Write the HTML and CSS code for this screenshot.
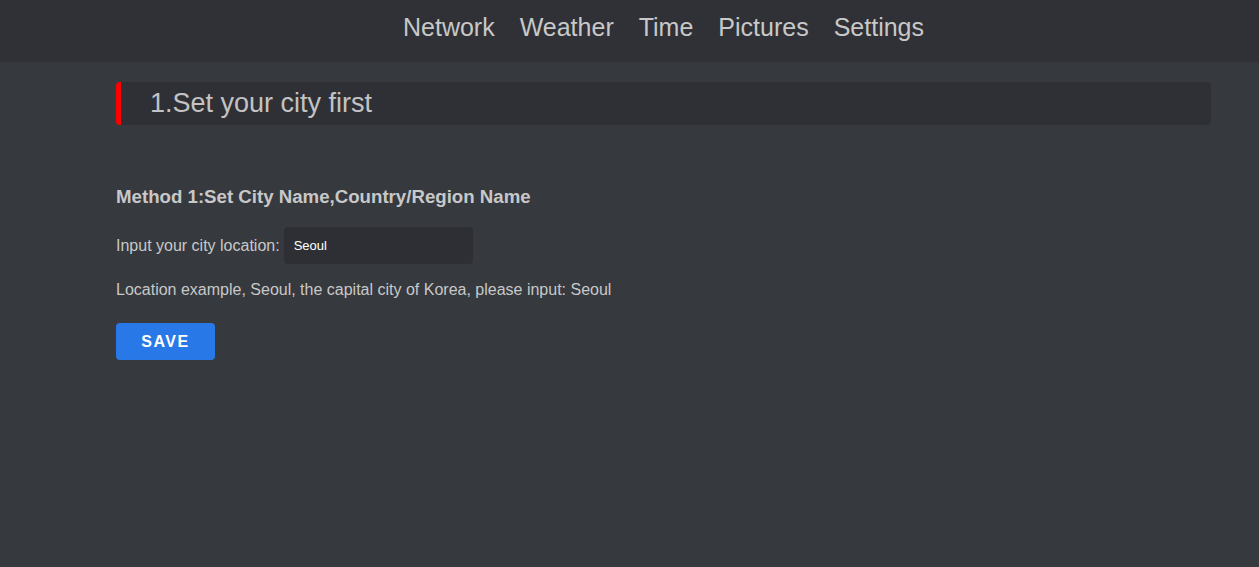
FILE: index.html
```html
<!DOCTYPE html>
<html>
<head>
<meta charset="utf-8">
<link rel="stylesheet" href="styles.css">
</head>
<body>
<header class="topbar">
  <nav class="nav">
    <a class="nav-item">Network</a>
    <a class="nav-item">Weather</a>
    <a class="nav-item">Time</a>
    <a class="nav-item">Pictures</a>
    <a class="nav-item">Settings</a>
  </nav>
</header>
<main class="main">
  <div class="section-title">1.Set your city first</div>
  <h3 class="method">Method 1:Set City Name,Country/Region Name</h3>
  <div class="row">
    <label class="label">Input your city location:</label>
    <input class="city-input" type="text" value="Seoul">
  </div>
  <p class="hint">Location example, Seoul, the capital city of Korea, please input: Seoul</p>
  <button class="save-btn">SAVE</button>
</main>
</body>
</html>
```
FILE: styles.css
```css
* { box-sizing: border-box; }
html, body {
  margin: 0;
  padding: 0;
  background: #36393e;
  font-family: "Liberation Sans", Arial, sans-serif;
  color: #c8c8c8;
}
.topbar {
  height: 62px;
  background: #2f3136;
  display: flex;
  align-items: center;
  justify-content: center;
  padding-left: 68px;
  padding-bottom: 7px;
}
.nav {
  display: flex;
  gap: 25px;
}
.nav-item {
  font-size: 25px;
  color: #c8c8c8;
  cursor: pointer;
}
.main {
  padding: 20px 48px 0 116px;
}
.section-title {
  height: 43px;
  background: #2f3036;
  border-left: 5px solid #ff0000;
  border-radius: 4px;
  font-size: 27px;
  color: #c3c3c3;
  display: flex;
  align-items: center;
  padding-left: 29px;
}
.method {
  margin: 61px 0 0 0;
  font-size: 18.67px;
  font-weight: bold;
  color: #c8c8c8;
  line-height: 22px;
}
.row {
  display: flex;
  align-items: center;
  gap: 4px;
  margin-top: 19px;
}
.label {
  font-size: 16px;
}
.city-input {
  width: 189px;
  height: 37px;
  background: #2e2f34;
  border: none;
  border-radius: 4px;
  color: #ffffff;
  font-family: "Liberation Sans", Arial, sans-serif;
  font-size: 13px;
  font-weight: normal;
  padding: 0 10px;
  outline: none;
}
.hint {
  font-size: 16px;
  margin: 17px 0 0 0;
  line-height: 18px;
}
.save-btn {
  margin-top: 24px;
  width: 99px;
  height: 37px;
  background: #2878e8;
  color: #ffffff;
  border: none;
  border-radius: 4px;
  font-family: "Liberation Sans", Arial, sans-serif;
  font-size: 16px;
  font-weight: bold;
  letter-spacing: 1.5px;
  cursor: pointer;
}
```
